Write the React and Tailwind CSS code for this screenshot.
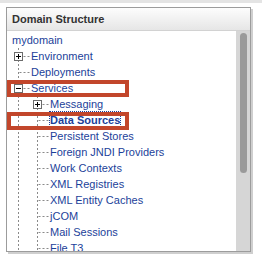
import React from "react";

const items = [
  { label: "mydomain", level: 0 },
  { label: "Environment", level: 1, box: "+" },
  { label: "Deployments", level: 1 },
  { label: "Services", level: 1, box: "-" },
  { label: "Messaging", level: 2, box: "+" },
  { label: "Data Sources", level: 2, selected: true },
  { label: "Persistent Stores", level: 2 },
  { label: "Foreign JNDI Providers", level: 2 },
  { label: "Work Contexts", level: 2 },
  { label: "XML Registries", level: 2 },
  { label: "XML Entity Caches", level: 2 },
  { label: "jCOM", level: 2 },
  { label: "Mail Sessions", level: 2 },
  { label: "File T3", level: 2 },
];

const dash = { stroke: "#8a8a8a", strokeWidth: 1, strokeDasharray: "2 2" };

function ExpandBox({ x, sign }) {
  return (
    <g>
      <rect x={x + 0.5} y={4.5} width={8} height={8} fill="#fff" stroke="#6b6b6b" />
      <line x1={x + 2} y1={8.5} x2={x + 7} y2={8.5} stroke="#000" />
      {sign === "+" && <line x1={x + 4.5} y1={6} x2={x + 4.5} y2={11} stroke="#000" />}
    </g>
  );
}

function Guides({ level, box }) {
  if (level === 0) return null;
  const w = level === 1 ? 19 : 38;
  const col = level === 1 ? 6.5 : 25.5;
  return (
    <svg width={w} height={16} className="shrink-0">
      <line x1={6.5} y1={0} x2={6.5} y2={16} {...dash} />
      {level === 2 && <line x1={25.5} y1={0} x2={25.5} y2={16} {...dash} />}
      <line x1={col + 1} y1={8.5} x2={w - 1} y2={8.5} {...dash} />
      {box && <ExpandBox x={col - 4.5} sign={box} />}
    </svg>
  );
}

export default function App() {
  return (
    <div className="relative w-[262px] h-[260px] overflow-hidden bg-white font-['Liberation_Sans',Arial,sans-serif]">
      <div className="h-[3px] bg-[#e4e4e4]" />
      <div className="ml-[6px] mt-[4px] w-[245px] h-[245px] border border-[#9c9c9c] shadow-[2px_2px_0_#cfcfcf] flex flex-col">
        <div className="h-[23px] shrink-0 border-b border-[#d2d2d2] bg-gradient-to-b from-[#fdfdfd] to-[#e6e6e6] pl-[5px] flex items-center">
          <span className="text-[11px] font-bold text-[#333]">Domain Structure</span>
        </div>
        <div className="flex flex-1 min-h-0">
          <div className="flex-1 overflow-hidden pt-[1px] pl-[5px]">
            {items.map((it) => (
              <div key={it.label} className="flex items-center h-[16px]">
                <Guides level={it.level} box={it.box} />
                <span
                  className={`text-[11px] leading-[16px] whitespace-nowrap text-[#1c3f9a] ${
                    it.selected ? "font-bold outline-1 outline-dotted outline-[#1c3f9a]" : ""
                  }`}
                >
                  {it.label}
                </span>
              </div>
            ))}
          </div>
          <div className="w-[14px] shrink-0 bg-[#d6d6d6] pt-[2px]">
            <div className="ml-[4px] w-[7px] h-[140px] rounded-full bg-[#9a9a9a]" />
          </div>
        </div>
      </div>
      <div className="absolute left-[7px] top-[80px] w-[122px] h-[17px] border-[4px] border-[#c2462b]" />
      <div className="absolute left-[7px] top-[112px] w-[122px] h-[18px] border-[4px] border-[#c2462b]" />
    </div>
  );
}
